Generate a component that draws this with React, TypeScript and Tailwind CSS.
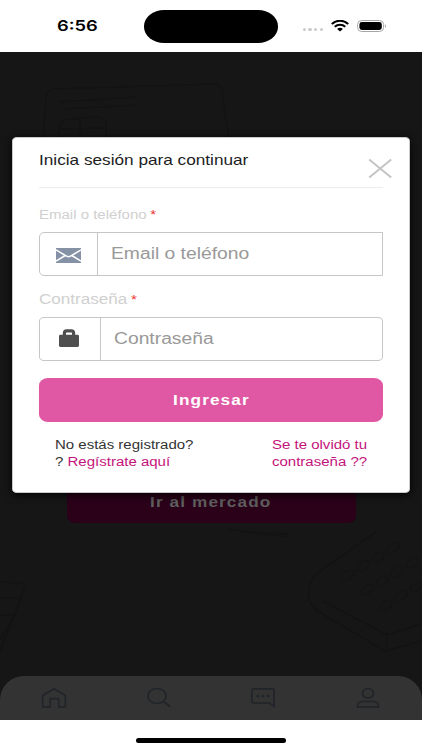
import type { ReactNode } from "react";

// ─── Helpers ─────────────────────────────────────────────────────────────────

// Wide lettering used all over the app
function Wide({ children, className = "origin-left" }: { children: ReactNode; className?: string }) {
    return (
        <span className={`inline-block whitespace-nowrap scale-x-[1.22] ${className}`}>
            {children}
        </span>
    );
}

function StatusBar() {
    return (
        <header className="flex h-[52px] shrink-0 items-start bg-white text-black">
            <div className="w-[144px] pl-[57px] pt-[16px] font-['Inter'] text-[15px] leading-[20px] font-semibold">
                <Wide>6:56</Wide>
            </div>
            <div className="mt-[10px] h-[32.5px] w-[134px] rounded-[20px/16.25px] bg-black" />
            <div className="flex items-start pl-[24.5px] pt-[19px]">
                <div className="mt-[9px] flex gap-[2.4px]">
                    {[0, 1, 2, 3].map((i) => (
                        <span key={i} className="h-[3px] w-[3.4px] rounded-full bg-[#cbcbcb]" />
                    ))}
                </div>
                <svg className="ml-[8px] mt-px" width="18" height="12" viewBox="0 0 18 12">
                    <path d="M.8 4C5.4-.3 12.6-.3 17.2 4" fill="none" stroke="#000" strokeWidth="2.1" />
                    <path d="M3.7 6.8c3-2.7 7.6-2.7 10.6 0" fill="none" stroke="#000" strokeWidth="2" />
                    <path d="M6.1 8.9c1.6-1.5 4.2-1.5 5.8 0L9 11.4z" fill="#000" />
                </svg>
                <svg className="ml-[8px]" width="30" height="14" viewBox="0 0 30 14">
                    <rect x=".6" y="1.5" width="26" height="11" rx="4" fill="none" stroke="#a6a6a6" />
                    <rect x="2.4" y="3.1" width="22.4" height="7.8" rx="2.4" fill="#000" />
                    <path d="M28 5.2c1.3.5 1.3 3.1 0 3.6z" fill="#a6a6a6" />
                </svg>
            </div>
        </header>
    );
}

// Faint line art behind the page content
function Backdrop() {
    return (
        <svg className="absolute inset-0" width="422" height="668" viewBox="0 52 422 668" fill="none" stroke="#131313" strokeWidth="1.5">
            <path d="M43 140l3-44q1-6 8-7l160-5q7 0 8 6l7 50" />
            <path d="M60 102l76-5M64 109l70-4M58 140l2-14q1-7 9-7l29-2q7 0 8 7v16M60 129l44-1M80 118v22" />
            <path d="M0 582l24 1q2 1 1 4L0 652M0 598h22M0 615h16M14 616L0 640" />
            <path d="M376 532l-60 42q-9 9-7 25 2 8 10 13l66 39 37-10M323 601l64 34 35-11M387 630v20" />
            <g stroke="#141414" strokeWidth="1.3">
                {[0, 1, 2].map((row) =>
                    [0, 1, 2, 3].map((col) => {
                        const cx = 348 + col * 15 + row * 19;
                        const cy = 575 - col * 9 + row * 15;
                        return (
                            <ellipse key={`${row}-${col}`} cx={cx} cy={cy} rx="7" ry="4" transform={`rotate(-36 ${cx} ${cy})`} />
                        );
                    }),
                )}
            </g>
            <path d="M228 529l60 8M240 532l48 2" />
        </svg>
    );
}

// ─── Login form ──────────────────────────────────────────────────────────────

function Label({ text, className }: { text: string; className: string }) {
    return (
        <div className={`text-[#d0d0d0] ${className}`}>
            <Wide>
                {text}
                <span className="ml-[3px] text-[12.3px] text-[#f0322f]">*</span>
            </Wide>
        </div>
    );
}

function LoginModal() {
    return (
        <section className="mt-[84.5px] flex h-[356px] w-[398px] flex-col rounded-[5px/4px] border border-[#c9c9c9] bg-white px-[26px] shadow-[0_2px_8px_rgba(0,0,0,0.9)]">
            <div className="flex h-[50px] shrink-0 justify-between border-b border-[#ececec]">
                <h1 className="pt-[12.5px] text-[14.1px] leading-[20px] text-[#1c1c1e]">
                    <Wide>Inicia sesión para continuar</Wide>
                </h1>
                <svg className="-mr-[10px] mt-[20px]" width="25" height="21" viewBox="0 0 25 21" stroke="#c4c4c4" strokeWidth="2">
                    <path d="M1.2 1.5l22 18M23.2 1.5l-22 18" />
                </svg>
            </div>

            <Label text="Email o teléfono" className="mt-[17px] h-[20px] shrink-0 text-[12.3px] leading-[20px]" />
            <div className="mt-[7.5px] flex h-[44px] shrink-0 rounded-l-[5px] border border-[#c6c6c6]">
                <div className="flex w-[58px] items-center justify-center border-r border-[#c6c6c6]">
                    <svg className="mt-[2px]" width="25" height="15" viewBox="0 0 25 15">
                        <path d="M0 0h25v15H0z" fill="#8591a5" />
                        <path d="M0 1.8l10.5 6.400q2 1.200 4 0L25 1.800M0 13.200l9.200-5.700M25 13.200l-9.200-5.700" fill="none" stroke="#fff" strokeWidth="1.5" />
                    </svg>
                </div>
                <div className="pl-[13px] text-[15.8px] leading-[42px] text-[#999]">
                    <Wide>Email o teléfono</Wide>
                </div>
            </div>

            <Label text="Contraseña" className="mt-[13px] h-[20px] shrink-0 text-[14px] leading-[20px]" />
            <div className="mt-[8px] flex h-[44px] shrink-0 rounded-[5px/4px] border border-[#c6c6c6]">
                <div className="flex w-[61px] items-center justify-center border-r border-[#c6c6c6]">
                    <svg className="-mt-[2px] mr-[3px]" width="20" height="18" viewBox="0 0 20 18">
                        <path d="M5.400 7V4Q5.400 1.800 7.600 1.800h4.800Q14.600 1.800 14.600 4v3" fill="none" stroke="#4f4f4f" strokeWidth="3.200" />
                        <rect y="5.800" width="20" height="12.200" rx="1.400" fill="#4f4f4f" />
                    </svg>
                </div>
                <div className="pl-[13px] text-[15.8px] leading-[42px] text-[#999]">
                    <Wide>Contraseña</Wide>
                </div>
            </div>

            <button className="mt-[17px] h-[44px] shrink-0 rounded-[9px/7.5px] bg-[#e058a4] pt-[2px] text-[14.1px] font-bold tracking-[0.9px] text-white">
                <Wide className="origin-center">Ingresar</Wide>
            </button>

            <div className="mt-[14.5px] flex px-[16px] text-[12.3px] leading-[17.6px]">
                <p className="w-[216.5px] text-[#333]">
                    <Wide>
                        No estás registrado?
                        <br />? <span className="text-[#c4147c]">Regístrate aquí</span>
                    </Wide>
                </p>
                <p className="text-[#c4147c]">
                    <Wide>
                        Se te olvidó tu
                        <br />
                        contraseña ??
                    </Wide>
                </p>
            </div>
        </section>
    );
}

// ─── Bottom navigation ───────────────────────────────────────────────────────

function TabBar() {
    return (
        <nav className="flex h-[44px] items-start justify-between rounded-t-[24px] bg-[#333] pl-[41px] pr-[41px] pt-[11px] text-[#212429]">
            <svg width="26" height="22" viewBox="0 0 26 22" fill="none" stroke="currentColor" strokeWidth="1.7">
                <path d="M1.6 20V8.5L13 1.7l11.4 6.800V20h-6.700v-8.300H9.200V20z" />
            </svg>
            <svg width="26" height="22" viewBox="0 0 26 22" fill="none" stroke="currentColor" strokeWidth="1.7">
                <ellipse cx="11" cy="9" rx="9" ry="7.500" />
                <path d="M17.400 14.500l6.800 5.300" strokeWidth="2" />
            </svg>
            <svg width="26" height="22" viewBox="0 0 26 22" fill="none" stroke="currentColor" strokeWidth="1.7">
                <path d="M3.500 1.800h19q1.500 0 1.500 1.300v16.200l-4.500-3.300h-16Q1.800 16 1.800 14.500V3.200q0-1.400 1.700-1.400z" />
                <path d="M6.500 9h2.600M11.700 9h2.600M16.900 9h2.600" strokeWidth="2.400" />
            </svg>
            <svg width="26" height="22" viewBox="0 0 26 22" fill="none" stroke="currentColor" strokeWidth="1.7">
                <ellipse cx="13" cy="6.400" rx="5.400" ry="4.700" />
                <path d="M2.600 19.800v-1.300q0-4 6-4h8.800q6 0 6 4v1.300z" />
            </svg>
        </nav>
    );
}

export default function App() {
    return (
        <div className="flex h-[750px] w-[422px] flex-col overflow-hidden bg-white font-['Liberation_Sans',sans-serif]">
            <StatusBar />
            <main className="relative flex h-[667.5px] shrink-0 flex-col justify-between bg-[#161616]">
                <Backdrop />
                <button className="relative mx-auto mt-[427px] h-[44px] w-[289px] rounded-[8px/6.5px] bg-[#2b0019] pt-[3px] text-[14.1px] font-bold tracking-[0.9px] text-[#5f5f5f]">
                    <Wide className="origin-center">Ir al mercado</Wide>
                </button>
                <div className="relative">
                    <TabBar />
                </div>

                <div className="absolute inset-0 flex items-start justify-center">
                    <LoginModal />
                </div>
            </main>
            <footer className="flex grow justify-center bg-white pt-[18.5px]">
                <div className="h-[4.5px] w-[150px] rounded-full bg-black" />
            </footer>
        </div>
    );
}
